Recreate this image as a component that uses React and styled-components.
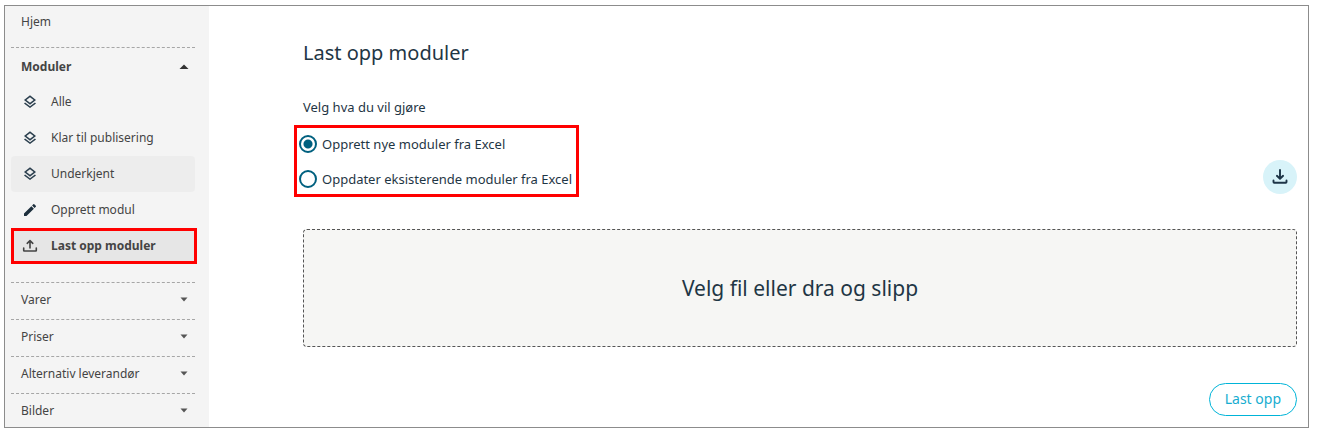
import React, { useState } from "react";
import styled, { createGlobalStyle } from "styled-components";

const GlobalStyle = createGlobalStyle`
  * {
    box-sizing: border-box;
  }
  body {
    margin: 0;
    background-color: #ffffff;
    font-family: "Noto Sans", "Open Sans", sans-serif;
    font-size: 13px;
    line-height: 18px;
    color: #1f3645;
  }
  button {
    font-family: inherit;
    cursor: pointer;
  }
`;

const Frame = styled.div`
  display: flex;
  margin: 5px 10px 12px 4px;
  border: 1px solid #8c8c8c;
`;

const Sidebar = styled.nav`
  flex: 0 0 204px;
  padding: 0 14px 0 6px;
  background-color: #f4f4f4;
  color: #444444;
  font-size: 12px;
`;

const HomeLink = styled.a`
  display: flex;
  align-items: center;
  height: 32px;
  margin-bottom: 9px;
  padding-left: 10px;
  color: inherit;
  text-decoration: none;
`;

const Section = styled.div`
  border-top: 1px dashed #a6a6a6;
  padding-bottom: ${(props) => (props.$open ? "18px" : "3px")};

  &:last-child {
    padding-bottom: 0;
  }
`;

const SectionButton = styled.button`
  display: flex;
  align-items: center;
  justify-content: space-between;
  width: 100%;
  height: ${(props) => (props.$open ? "36px" : "33px")};
  padding: 0 6px 0 10px;
  border: none;
  background: none;
  color: inherit;
  font-size: 12px;
  font-weight: ${(props) => (props.$open ? 700 : 400)};
`;

const MenuLink = styled.a`
  display: flex;
  align-items: center;
  gap: 13px;
  height: 36px;
  padding-left: 11px;
  border-radius: 4px;
  color: inherit;
  text-decoration: none;
  background-color: ${(props) => (props.$hover ? "#ededed" : "transparent")};
`;

const MarkedLink = styled(MenuLink)`
  margin-right: -2px;
  padding-left: 8px;
  border: 3px solid #ff0000;
  border-radius: 0;
  background-color: #e6e6e6;
  font-weight: 700;
`;

const Main = styled.main`
  flex: 1;
  display: flex;
  flex-direction: column;
  padding: 32px 11px 10px 94px;
`;

const Title = styled.h1`
  margin: 0;
  font-size: 20px;
  line-height: 30px;
  font-weight: 400;
`;

const Question = styled.p`
  margin: 30px 0 9px;
`;

const ChoiceRow = styled.div`
  display: flex;
  align-items: flex-end;
  justify-content: space-between;
  margin-bottom: 32px;
`;

const Choices = styled.div`
  display: flex;
  flex-direction: column;
  gap: 17px;
  width: 285px;
  margin-left: -9px;
  padding: 7px 2px 6px;
  border: 3px solid #ff0000;
`;

const Choice = styled.label`
  display: flex;
  align-items: center;
  gap: 5px;
  height: 18px;
  white-space: nowrap;
`;

const Radio = styled.input`
  appearance: none;
  flex: none;
  width: 18px;
  height: 18px;
  margin: 0;
  border: 2px solid #00607f;
  border-radius: 50%;
  background-color: #ffffff;

  &:checked {
    background-image: radial-gradient(#00607f 4px, transparent 5px);
  }
`;

const DownloadButton = styled.button`
  display: flex;
  align-items: center;
  justify-content: center;
  width: 34px;
  height: 34px;
  margin-bottom: 3px;
  padding: 0;
  border: none;
  border-radius: 50%;
  background-color: #d8f3f9;
  color: #1d3447;
`;

const DropZone = styled.label`
  position: relative;
  display: flex;
  align-items: center;
  justify-content: center;
  height: 118px;
  border: 1px dashed #555555;
  border-radius: 4px;
  background-color: #f6f6f4;
  font-size: 21px;
  line-height: 30px;
  cursor: pointer;
`;

const FileInput = styled.input`
  position: absolute;
  inset: 0;
  width: 100%;
  height: 100%;
  opacity: 0;
  cursor: pointer;
`;

const UploadButton = styled.button`
  align-self: flex-end;
  height: 33px;
  margin-top: 36px;
  padding: 0 15px 2px;
  border: 1px solid #00b4d8;
  border-radius: 17px;
  background-color: #ffffff;
  color: #17add0;
  font-size: 14px;
`;

const LayersIcon = () => (
  <svg width="16" height="16" viewBox="0 0 24 24" fill="#2b3f4e" aria-hidden="true">
    <path d="M12 2 21 9 12 16 3 9zM12 4.800 6.600 9 12 13.200 17.400 9z" fillRule="evenodd" />
    <path d="M4.600 12.800 12 18.500 19.400 12.800 21 14.100 12 21.100 3 14.100z" />
  </svg>
);

const PencilIcon = () => (
  <svg width="16" height="16" viewBox="0 0 24 24" fill="#1d2f3d" aria-hidden="true">
    <path d="M3 17.250V21h3.750L17.810 9.940l-3.750-3.750L3 17.250zM20.710 7.040a1 1 0 0 0 0-1.410l-2.340-2.340a1 1 0 0 0-1.410 0l-1.830 1.830 3.750 3.750 1.830-1.830z" />
  </svg>
);

const TrayIcon = ({ size, up, weight }) => (
  <svg
    width={size}
    height={size}
    viewBox="0 0 16 16"
    fill="none"
    stroke="currentColor"
    strokeWidth={weight}
    strokeLinecap="round"
    strokeLinejoin="round"
    aria-hidden="true"
  >
    <path d={up ? "M1.700 10V12.500q0 .5.5.5h11.600q.5 0 .5-.5V10" : "M1.500 11.500V13q0 .7.7.7h11.600q.7 0 .7-.7v-1.500"} />
    <path d={up ? "M8 10V3M5.200 5.300 8 2.700 10.800 5.300" : "M8 1V9.500M4.900 6.800 8 9.800 11.100 6.800"} />
  </svg>
);

const Caret = ({ open }) =>
  open ? (
    <svg width="10" height="5" viewBox="0 0 10 5" fill="#333333" aria-hidden="true">
      <path d="M0.500 5 5 0.500 9.500 5z" />
    </svg>
  ) : (
    <svg width="10" height="5" viewBox="0 0 10 5" fill="#555555" aria-hidden="true">
      <path d="M1.500 0.500h7L5 4.500z" />
    </svg>
  );

const menuItems = ["Alle", "Klar til publisering", "Underkjent"];
const closedSections = ["Varer", "Priser", "Alternativ leverandør", "Bilder"];
const choices = [
  { value: "create", label: "Opprett nye moduler fra Excel" },
  { value: "update", label: "Oppdater eksisterende moduler fra Excel" },
];

const App = () => {
  const [action, setAction] = useState("create");

  return (
    <>
      <GlobalStyle />
      <Frame>
        <Sidebar>
          <HomeLink href="#">Hjem</HomeLink>
          <Section $open>
            <SectionButton $open aria-expanded="true">
              Moduler
              <Caret open />
            </SectionButton>
            {menuItems.map((item) => (
              <MenuLink href="#" key={item} $hover={item === "Underkjent"}>
                <LayersIcon />
                {item}
              </MenuLink>
            ))}
            <MenuLink href="#">
              <PencilIcon />
              Opprett modul
            </MenuLink>
            <MarkedLink href="#" aria-current="page">
              <TrayIcon size={16} weight={1.6} up />
              Last opp moduler
            </MarkedLink>
          </Section>
          {closedSections.map((name) => (
            <Section key={name}>
              <SectionButton aria-expanded="false">
                {name}
                <Caret />
              </SectionButton>
            </Section>
          ))}
        </Sidebar>
        <Main>
          <Title>Last opp moduler</Title>
          <Question id="question">Velg hva du vil gjøre</Question>
          <ChoiceRow>
            <Choices role="radiogroup" aria-labelledby="question">
              {choices.map(({ value, label }) => (
                <Choice key={value}>
                  <Radio
                    type="radio"
                    name="action"
                    value={value}
                    checked={action === value}
                    onChange={() => setAction(value)}
                  />
                  {label}
                </Choice>
              ))}
            </Choices>
            <DownloadButton aria-label="Last ned">
              <TrayIcon size={16} weight={1.9} />
            </DownloadButton>
          </ChoiceRow>
          <DropZone>
            Velg fil eller dra og slipp
            <FileInput type="file" />
          </DropZone>
          <UploadButton>Last opp</UploadButton>
        </Main>
      </Frame>
    </>
  );
};

export default App;
